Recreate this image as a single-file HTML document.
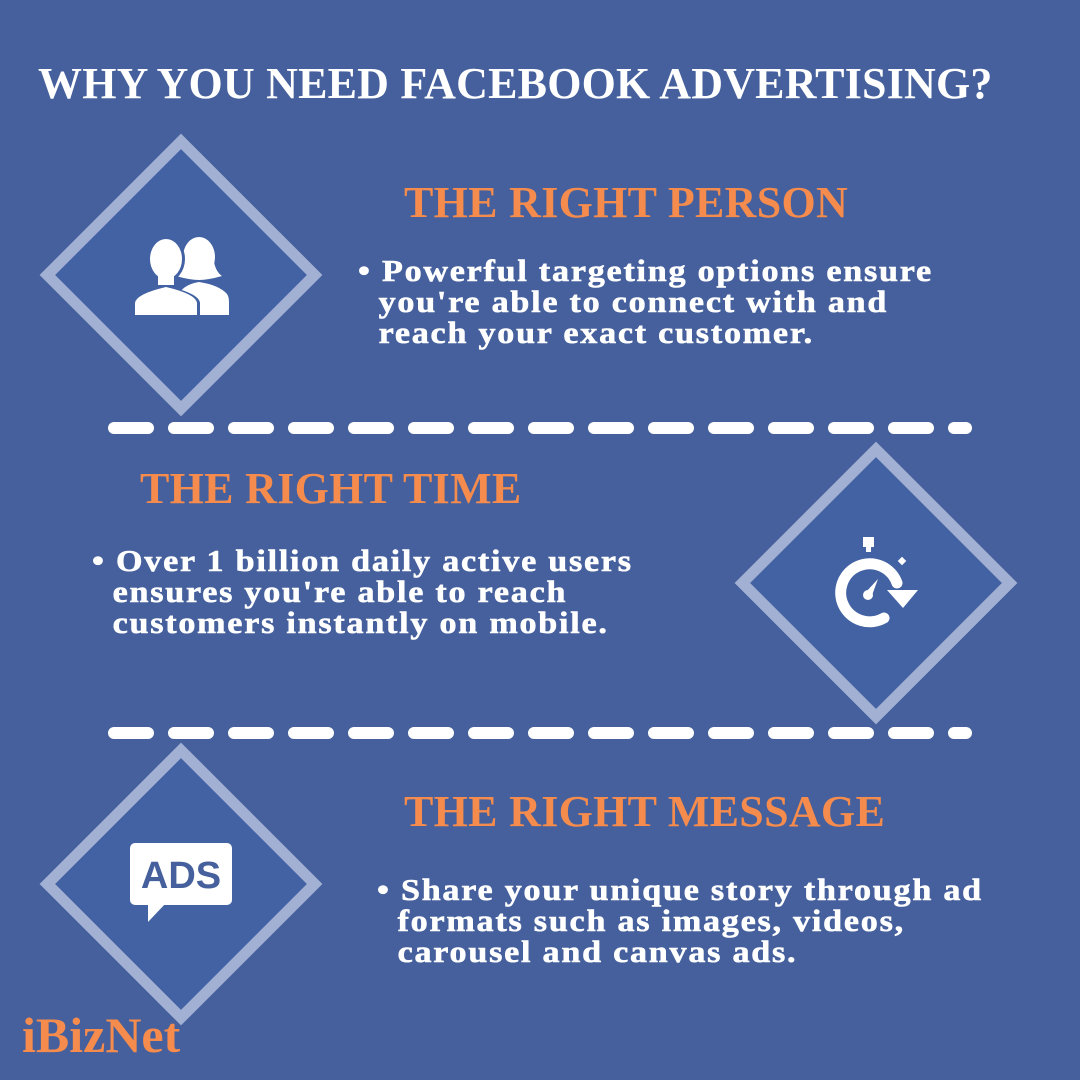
<!DOCTYPE html>
<html><head><meta charset="utf-8"><style>
*{margin:0;padding:0}
body{width:1080px;height:1080px;background:#45609c;position:relative;overflow:hidden;font-family:"Liberation Serif",serif;font-weight:bold}
h1{position:absolute;left:38px;top:58px;color:#fff;font-size:44px;letter-spacing:0.2px;white-space:nowrap}
.h{position:absolute;color:#f58b4c;font-size:44px;white-space:nowrap;letter-spacing:0.3px}
.b{position:absolute;color:#fff;font-size:31px;line-height:31px;white-space:nowrap;letter-spacing:1.6px;transform:scaleX(1.1);transform-origin:0 0;-webkit-text-stroke:0.6px #fff}
.dm{position:absolute;width:200px;height:200px;transform:rotate(45deg);background:#4262a3;border:11px solid #a2b0d3;box-sizing:border-box}
</style></head><body>
<h1>WHY YOU NEED FACEBOOK ADVERTISING?</h1>

<div class="dm" style="left:81px;top:175px"></div>
<div class="dm" style="left:776px;top:483px"></div>
<div class="dm" style="left:81px;top:784px"></div>

<svg style="position:absolute;left:0;top:0" width="1080" height="1080" viewBox="0 0 1080 1080">
<ellipse cx="199" cy="257" rx="16" ry="20" fill="#fff"/>
<path d="M184 262 q-2 10 -8 14 q14 4 23 4 q9 0 23-4 q-6-4-8-14z" fill="#fff"/>
<path d="M180 292 q6-8 19-10 q20 3 28 12 q2 3 2 8 v13 h-49z" fill="#fff"/>
<ellipse cx="166" cy="259" rx="19" ry="23" fill="#4262a3"/>
<path d="M132 316 v-13 q1-10 34-17 q33 7 34 17 v13z" fill="#4262a3"/>
<ellipse cx="166" cy="259" rx="16" ry="20" fill="#fff"/>
<path d="M158 275 h16 v10 h-16z" fill="#fff"/>
<path d="M135 315 v-12 q1-9 31-16 q30 7 31 16 v12z" fill="#fff"/>
<rect x="863" y="537" width="11" height="10" fill="#fff"/>
<rect x="866" y="545" width="5" height="7" fill="#fff"/>
<rect x="899" y="558" width="6" height="6" fill="#fff" transform="rotate(45 902 561)"/>
<path d="M884 618 A29 29 0 1 1 897 583" fill="none" stroke="#fff" stroke-width="11" stroke-linecap="round"/>
<polygon points="887,590 918,590 903,608" fill="#fff"/>
<circle cx="868" cy="595" r="5" fill="#fff"/>
<path d="M865 593 L878 579 L871 598Z" fill="#fff"/>
<rect x="130" y="843" width="102" height="62" rx="5" fill="#fff"/>
<path d="M148 903 L148 922 L166 903Z" fill="#fff"/>
<text x="181" y="888" text-anchor="middle" font-family="Liberation Sans" font-weight="bold" font-size="38" fill="#45609c">ADS</text>
<g stroke="#fff" stroke-width="12" stroke-linecap="round">
<path d="M114 428h34M174 428h34M234 428h34M294 428h34M354 428h34M414 428h34M474 428h34M534 428h34M594 428h34M654 428h34M714 428h34M774 428h34M834 428h34M894 428h34M954 428h12"/>
<path d="M114 733h34M174 733h34M234 733h34M294 733h34M354 733h34M414 733h34M474 733h34M534 733h34M594 733h34M654 733h34M714 733h34M774 733h34M834 733h34M894 733h34M954 733h12"/>
</g>
</svg>

<div class="h" style="left:404px;top:177px">THE RIGHT PERSON</div>
<div class="b" style="left:358px;top:255px">• Powerful targeting options ensure<br>&nbsp;&nbsp;you're able to connect with and<br>&nbsp;&nbsp;reach your exact customer.</div>

<div class="h" style="left:140px;top:463px">THE RIGHT TIME</div>
<div class="b" style="left:92px;top:545px">• Over 1 billion daily active users<br>&nbsp;&nbsp;ensures you're able to reach<br>&nbsp;&nbsp;customers instantly on mobile.</div>

<div class="h" style="left:404px;top:786px">THE RIGHT MESSAGE</div>
<div class="b" style="left:377px;top:874px">• Share your unique story through ad<br>&nbsp;&nbsp;formats such as images, videos,<br>&nbsp;&nbsp;carousel and canvas ads.</div>

<div class="h" style="left:22px;top:1006px;font-size:50px;letter-spacing:0">iBizNet</div>
</body></html>
